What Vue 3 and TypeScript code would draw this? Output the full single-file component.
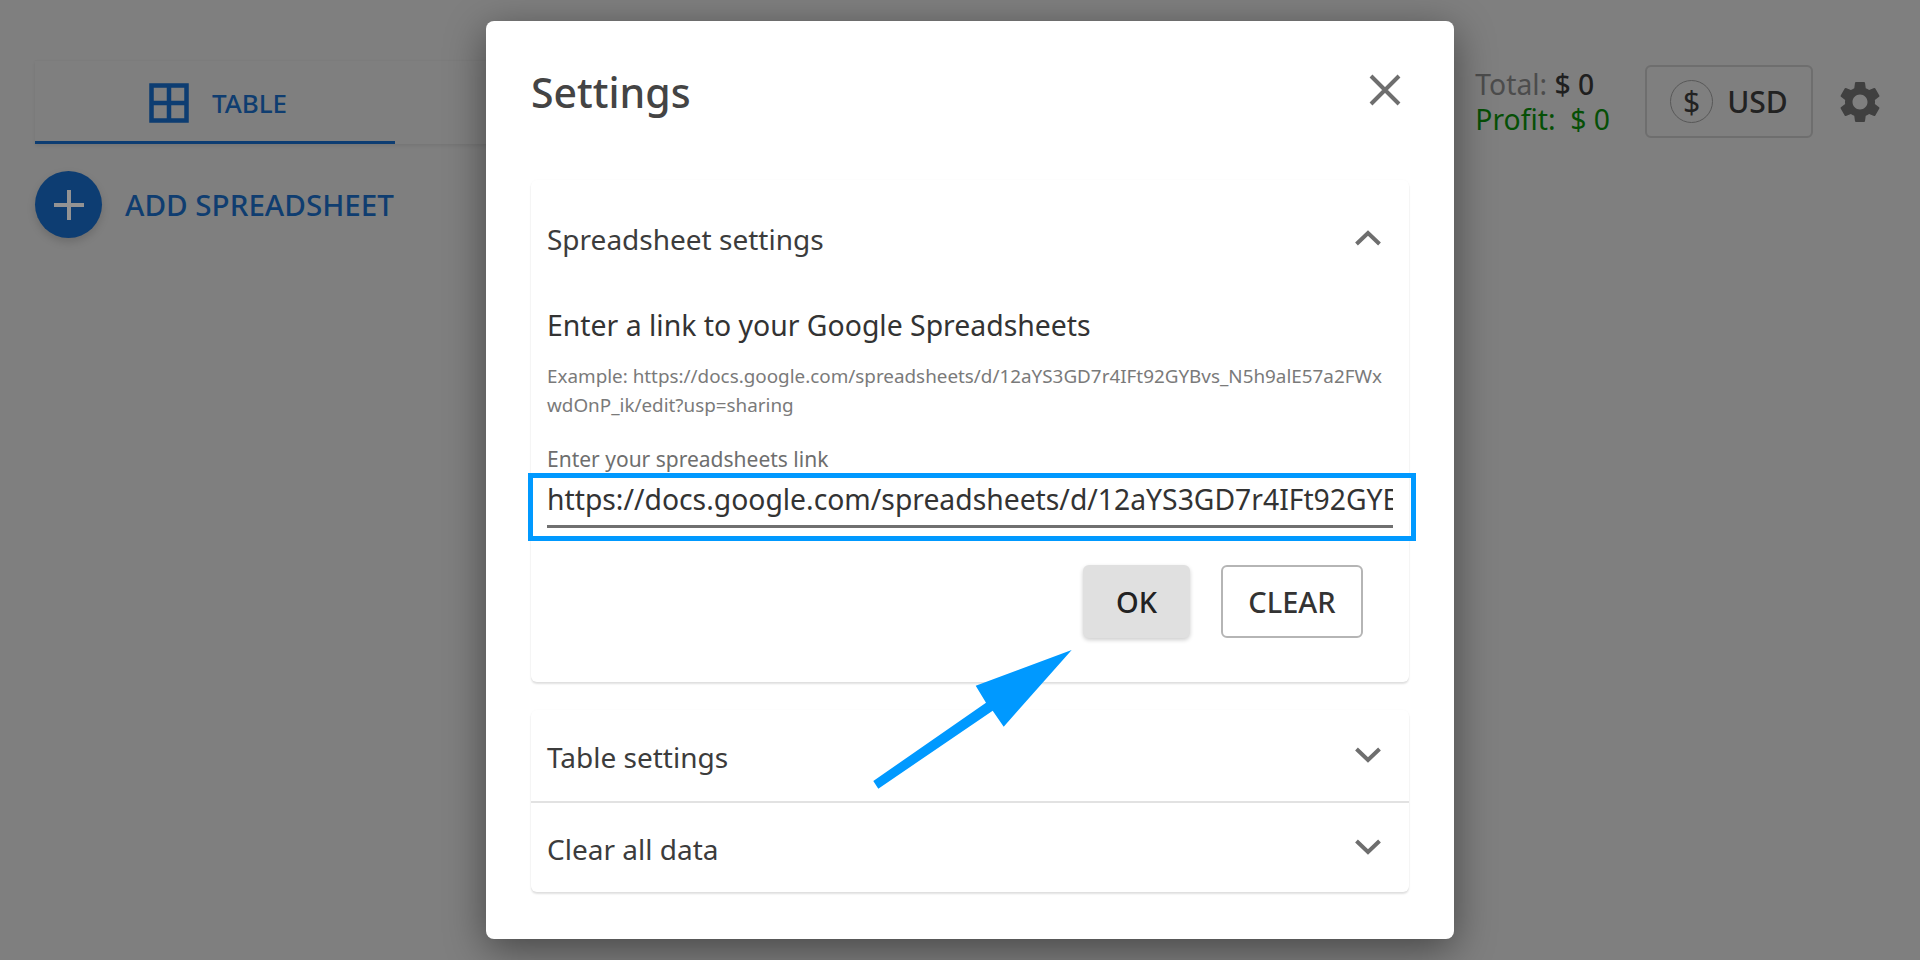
<script setup lang="ts">
import { ref } from 'vue'

const sheetLink = ref(
  'https://docs.google.com/spreadsheets/d/12aYS3GD7r4IFt92GYBvs_N5h9alE57a2FWxwdOnP_ik/edit?usp=sharing'
)
</script>

<template>
  <div class="page">
    <header class="topbar">
      <div class="left">
        <div class="tabs">
          <div class="tab">
            <svg class="tableIcon" width="40" height="40" viewBox="0 0 40 40" fill="none" stroke="#0d3d72" stroke-width="4.5">
              <rect x="2.5" y="2.5" width="35" height="35" />
              <path d="M20 2V38M2 20H38" />
            </svg>
            <span>TABLE</span>
          </div>
        </div>
        <div class="addRow">
          <span class="fab">
            <svg width="32" height="32" viewBox="0 0 32 32" stroke="#939393" stroke-width="4">
              <path d="M16 1V31M1 16H31" />
            </svg>
          </span>
          <span class="addText">ADD SPREADSHEET</span>
        </div>
      </div>
      <div class="right">
        <div class="totals">
          <div class="total">Total: <b>$ 0</b></div>
          <div class="profit">Profit:&nbsp; $ 0</div>
        </div>
        <div class="currency">
          <span class="coin">$</span>
          <span>USD</span>
        </div>
        <svg class="gear" width="50" height="50" viewBox="0 0 24 24" fill="#404040">
          <path d="M19.14 12.94c.04-.3.06-.61.06-.94 0-.32-.02-.64-.07-.94l2.03-1.58a.49.49 0 0 0 .12-.61l-1.92-3.32a.488.488 0 0 0-.59-.22l-2.39.96c-.5-.38-1.03-.7-1.62-.94l-.36-2.54a.484.484 0 0 0-.48-.41h-3.84c-.24 0-.43.17-.47.41l-.36 2.54c-.59.24-1.13.57-1.62.94l-2.39-.96c-.22-.08-.47 0-.59.22L2.74 8.87c-.12.21-.08.47.12.61l2.03 1.58c-.05.3-.09.63-.09.94s.02.64.07.94l-2.03 1.58a.49.49 0 0 0-.12.61l1.92 3.32c.12.22.37.29.59.22l2.39-.96c.5.38 1.03.7 1.62.94l.36 2.54c.05.24.24.41.48.41h3.84c.24 0 .44-.17.47-.41l.36-2.54c.59-.24 1.13-.56 1.62-.94l2.39.96c.22.08.47 0 .59-.22l1.92-3.32c.12-.22.07-.47-.12-.61l-2.01-1.58zM12 15.6c-1.98 0-3.6-1.62-3.6-3.6s1.62-3.6 3.6-3.6 3.6 1.62 3.6 3.6-1.62 3.6-3.6 3.6z" />
        </svg>
      </div>
    </header>

    <div class="overlay">
      <div class="modal">
        <div class="modalHead">
          <h2>Settings</h2>
          <svg width="32" height="32" viewBox="0 0 32 32" stroke="#6e6e6e" stroke-width="4" fill="none">
            <path d="M2 2L30 30M30 2L2 30" />
          </svg>
        </div>

        <section class="card open">
          <div class="cardHead">
            <span>Spreadsheet settings</span>
            <svg width="26" height="18" viewBox="0 0 26 18" fill="none" stroke="#6e6e6e" stroke-width="4">
              <path d="M1.5 15L13 4L24.5 15" />
            </svg>
          </div>
          <div class="cardBody">
            <h3>Enter a link to your Google Spreadsheets</h3>
            <p class="example">
              Example: https://docs.google.com/spreadsheets/d/12aYS3GD7r4IFt92GYBvs_N5h9alE57a2FWxwdOnP_ik/edit?usp=sharing
            </p>
            <label class="linkLabel">Enter your spreadsheets link</label>
            <div class="highlight">
              <input v-model="sheetLink" class="linkInput" type="text" />
            </div>
            <div class="actions">
              <button class="btn ok">OK</button>
              <button class="btn clear">CLEAR</button>
            </div>
          </div>
        </section>

        <section class="card group">
          <div class="cardHead row">
            <span>Table settings</span>
            <svg width="26" height="18" viewBox="0 0 26 18" fill="none" stroke="#6e6e6e" stroke-width="4">
              <path d="M1.5 3L13 14L24.5 3" />
            </svg>
          </div>
          <div class="cardHead row">
            <span>Clear all data</span>
            <svg width="26" height="18" viewBox="0 0 26 18" fill="none" stroke="#6e6e6e" stroke-width="4">
              <path d="M1.5 3L13 14L24.5 3" />
            </svg>
          </div>
        </section>
      </div>
    </div>

    <!-- annotation arrow drawn over the dialog -->
    <svg class="arrow" width="1920" height="960" viewBox="0 0 1920 960" fill="#0099ff">
      <path d="M873.3 781L986 702.7L975.7 685.7L1071.7 650L1003.7 726.7L992.7 710.7L878.3 788.7Z" />
    </svg>
  </div>
</template>

<style scoped>
.page {
  position: relative;
  width: 1920px;
  height: 960px;
  overflow: hidden;
  background: #7f7f7f;
  font-family: "Noto Sans", "Open Sans", sans-serif;
  color: #3a3a3a;
}

.topbar {
  display: flex;
  justify-content: space-between;
  padding: 60px 35px 0 35px;
}

.tabs {
  width: 700px;
  height: 83px;
  border-top: 1px solid #7c7c7c;
  box-shadow: 0 2px 3px rgba(0, 0, 0, 0.08);
}

.tab {
  display: flex;
  align-items: center;
  justify-content: center;
  gap: 23px;
  width: 360px;
  height: 83px;
  box-sizing: border-box;
  border-bottom: 3px solid #0d3d72;
  padding: 4px 0 0 6px;
  color: #0f3d70;
  font-size: 26px;
  font-weight: 500;
}

.addRow {
  display: flex;
  align-items: center;
  gap: 23px;
  margin-top: 27px;
}

.fab {
  display: flex;
  align-items: center;
  justify-content: center;
  width: 67px;
  height: 67px;
  border-radius: 50%;
  background: #0d3d72;
  box-shadow: 0 4px 8px rgba(0, 0, 0, 0.15);
}

.addText {
  color: #0f3d70;
  font-size: 29.6px;
  font-weight: 500;
}

.right {
  display: flex;
  align-items: flex-start;
}

.totals {
  margin-right: 35px;
  font-size: 28.3px;
  line-height: 35px;
  padding-top: 7px;
  color: #4c4c4c;
}

.total b {
  font-weight: 500;
  color: #1f1f1f;
}

.profit {
  color: #064f06;
}

.currency {
  display: flex;
  align-items: center;
  justify-content: center;
  gap: 14px;
  width: 168px;
  height: 73px;
  margin-top: 5px;
  box-sizing: border-box;
  border: 2px solid #6e6e6e;
  border-radius: 6px;
  color: #222;
  font-size: 30px;
  font-weight: 500;
}

.coin {
  display: flex;
  align-items: center;
  justify-content: center;
  width: 43px;
  height: 43px;
  box-sizing: border-box;
  border: 1.5px solid #585858;
  border-radius: 50%;
  font-size: 30px;
  font-weight: 400;
}

.gear {
  margin: 17px 0 0 22px;
}

.overlay {
  position: absolute;
  inset: 0;
  display: flex;
  align-items: center;
  justify-content: center;
  padding-left: 20px;
}

.modal {
  width: 968px;
  height: 918px;
  box-sizing: border-box;
  padding: 0 45px;
  background: #fff;
  border-radius: 8px;
  box-shadow: 0 10px 40px rgba(0, 0, 0, 0.45);
}

.modalHead {
  display: flex;
  align-items: center;
  justify-content: space-between;
  height: 159px;
  padding: 0 8px 18px 0;
  box-sizing: border-box;
}

.modalHead h2 {
  margin: 0;
  font-size: 41px;
  font-weight: 500;
  color: #444;
}

.modalHead svg {
  margin-bottom: 3px;
}

.card {
  background: #fff;
  border-radius: 6px;
  box-shadow: 0 2px 2px rgba(0, 0, 0, 0.12), 0 0 2px rgba(0, 0, 0, 0.03);
}

.cardHead {
  display: flex;
  align-items: center;
  justify-content: space-between;
  height: 118px;
  padding: 0 28px 0 16px;
  font-size: 28px;
  color: #3c3c3c;
}

.cardHead svg {
  margin-bottom: 3px;
}

.cardBody {
  height: 384px;
  box-sizing: border-box;
  padding: 7px 16px 0;
}

.cardBody h3 {
  margin: 0;
  font-size: 28.4px;
  line-height: 40px;
  font-weight: 400;
  color: #333;
}

.example {
  margin: 17px 0 0;
  font-size: 18.85px;
  line-height: 28.5px;
  color: #7a7a7a;
  word-break: break-all;
}

.linkLabel {
  display: block;
  margin-top: 26px;
  font-size: 21px;
  line-height: 28px;
  color: #6e6e6e;
}

.highlight {
  margin: 0 -23px 0 -19px;
  height: 68px;
  box-sizing: border-box;
  border: 5px solid #0099ff;
  padding: 0 18px 0 14px;
}

.linkInput {
  display: block;
  width: 100%;
  height: 50px;
  box-sizing: border-box;
  border: 0;
  border-bottom: 3px solid #707070;
  outline: 0;
  padding: 0 0 5px;
  background: none;
  font: inherit;
  font-size: 28.3px;
  color: #333;
}

.actions {
  display: flex;
  justify-content: flex-end;
  gap: 31px;
  margin-top: 24px;
  padding-right: 30px;
}

.btn {
  height: 73px;
  border-radius: 6px;
  font-family: inherit;
  font-size: 29px;
  font-weight: 500;
  color: #222;
}

.ok {
  width: 107px;
  border: 0;
  background: #e0e0e0;
  box-shadow: 0 2px 4px rgba(0, 0, 0, 0.2);
}

.clear {
  width: 142px;
  border: 2px solid #b5b5b5;
  background: #fff;
  color: #333;
}

.group {
  margin-top: 28px;
}

.row {
  height: 91px;
  padding-top: 2px;
  box-sizing: border-box;
}

.row + .row {
  border-top: 2px solid #e2e2e2;
}

.arrow {
  position: absolute;
  top: 0;
  left: 0;
  pointer-events: none;
}
</style>

<style>
html,
body {
  margin: 0;
}
</style>
